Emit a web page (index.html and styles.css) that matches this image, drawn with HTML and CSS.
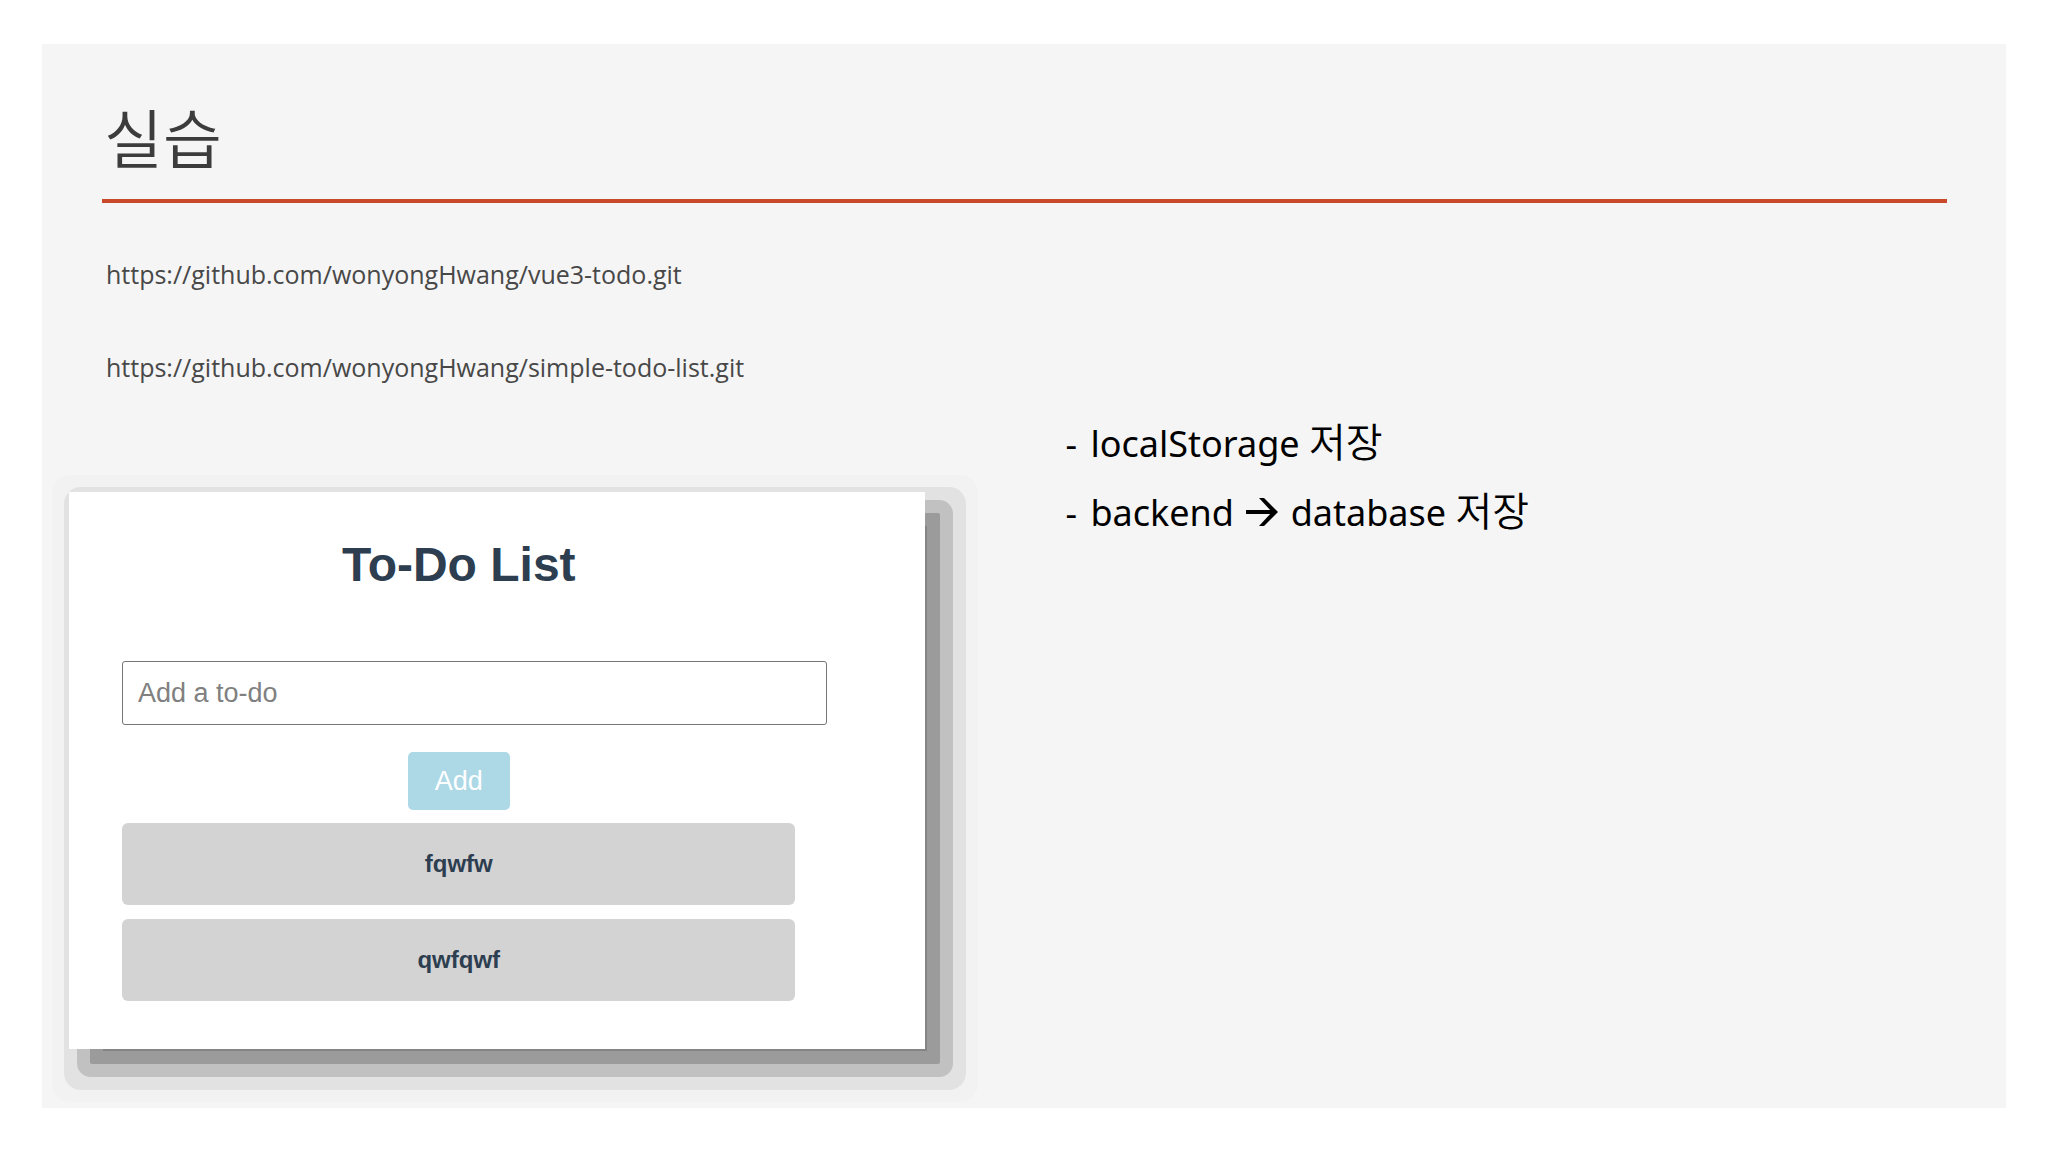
FILE: index.html
```html
<!DOCTYPE html>
<html lang="ko">
<head>
<meta charset="utf-8">
<meta name="viewport" content="width=device-width, initial-scale=1">
<title>실습</title>
<link rel="stylesheet" href="styles.css">
</head>
<body>
<main class="slide">
  <header class="slide-header">
    <h1 class="slide-title">실습</h1>
  </header>
  <div class="slide-body">
    <section class="left">
      <ul class="links">
        <li><a href="https://github.com/wonyongHwang/vue3-todo.git">https://github.com/wonyongHwang/vue3-todo.git</a></li>
        <li><a href="https://github.com/wonyongHwang/simple-todo-list.git">https://github.com/wonyongHwang/simple-todo-list.git</a></li>
      </ul>
      <div class="shadow">
        <form class="card">
          <h2 class="card-title">To-Do List</h2>
          <input class="todo-input" type="text" placeholder="Add a to-do" aria-label="Add a to-do">
          <button class="add" type="button">Add</button>
          <ul class="todos">
            <li>fqwfw</li>
            <li>qwfqwf</li>
          </ul>
        </form>
      </div>
    </section>
    <section class="notes">
      <p><span class="dash">-</span> localStorage <span class="ko">저장</span></p>
      <p><span class="dash">-</span> backend <svg class="arrow" viewBox="0 0 32 28" role="img" aria-label="to"><path d="M0 14H28M13 0H18L32 14L18 28H13L26 14Z" fill="currentColor" stroke="none"/><path d="M0 14H28" stroke="currentColor" stroke-width="4"/></svg> database <span class="ko">저장</span></p>
    </section>
  </div>
</main>
</body>
</html>
```
FILE: styles.css
```css
body {
  margin: 0;
  padding: 44px 42px;
  background: #fff;
  font-family: "Noto Sans", "Noto Sans CJK KR", sans-serif;
}

.slide {
  background: #f5f5f5;
  padding-bottom: 59px;
}

.slide-header {
  margin: 0 59px 0 60px;
  padding: 51px 2px 24px;
  border-bottom: 4px solid #c9492a;
}

.slide-title {
  margin: 0;
  font: 350 64px/80px "Noto Sans CJK KR", sans-serif;
  color: #3c3c3c;
}

.slide-body {
  display: grid;
  grid-template-columns: 856fr 940fr;
  column-gap: 140px;
  padding-left: 27px;
}

.links {
  display: grid;
  gap: 53px;
  margin: 0 0 105px;
  padding: 51px 0 0 37px;
  list-style: none;
  font-family: "Open Sans", "Noto Sans", sans-serif;
  font-size: 25px;
  line-height: 40px;
}

.links a {
  color: #484848;
  text-decoration: none;
}

/* Stepped drop shadow, one flat layer per step */
.shadow {
  border-radius: 5px;
  box-shadow:
    18px 18px 0 -16px #858585,
    18px 18px 0 -3px #9b9b9b,
    18px 18px 0 10px #c1c1c1,
    18px 18px 0 23px #e2e2e2,
    18px 18px 0 35px #f2f2f2;
}

.card {
  display: flex;
  flex-direction: column;
  align-items: center;
  padding: 43px 130px 48px 53px;
  background: #fff;
  font-family: "Liberation Sans", Arial, sans-serif;
  color: #2c3e50;
}

.card-title {
  margin: 0 0 66px;
  font-size: 48px;
  line-height: 60px;
}

.todo-input {
  align-self: flex-start;
  box-sizing: content-box;
  width: 100%;
  height: 32px;
  margin: 0 0 27px;
  padding: 15px;
  border: 1px solid #757575;
  border-radius: 3px;
  background: #fff;
  font: 27px/30px "Liberation Sans", Arial, sans-serif;
}

.todo-input::placeholder {
  color: #808080;
}

.add {
  padding: 14px 27px;
  border: 0;
  border-radius: 5px;
  background: #add8e6;
  color: #fff;
  font: 27px/30px "Liberation Sans", Arial, sans-serif;
}

.todos {
  display: grid;
  gap: 14px;
  width: 100%;
  margin: 13px 0 0;
  padding: 0;
  list-style: none;
}

.todos li {
  padding: 26px;
  border-radius: 6px;
  background: #d3d3d3;
  font-size: 24px;
  font-weight: 700;
  line-height: 30px;
  text-align: center;
}

.notes {
  padding-top: 206px;
  font-size: 36px;
  line-height: 69px;
  color: #000;
}

.notes p {
  margin: 0;
}

.dash {
  margin-right: 4px;
}

.ko {
  font: 350 40px/60px "Noto Sans CJK KR", sans-serif;
}

.arrow {
  width: 32px;
  height: 28px;
  margin: 0 3px;
}
```
